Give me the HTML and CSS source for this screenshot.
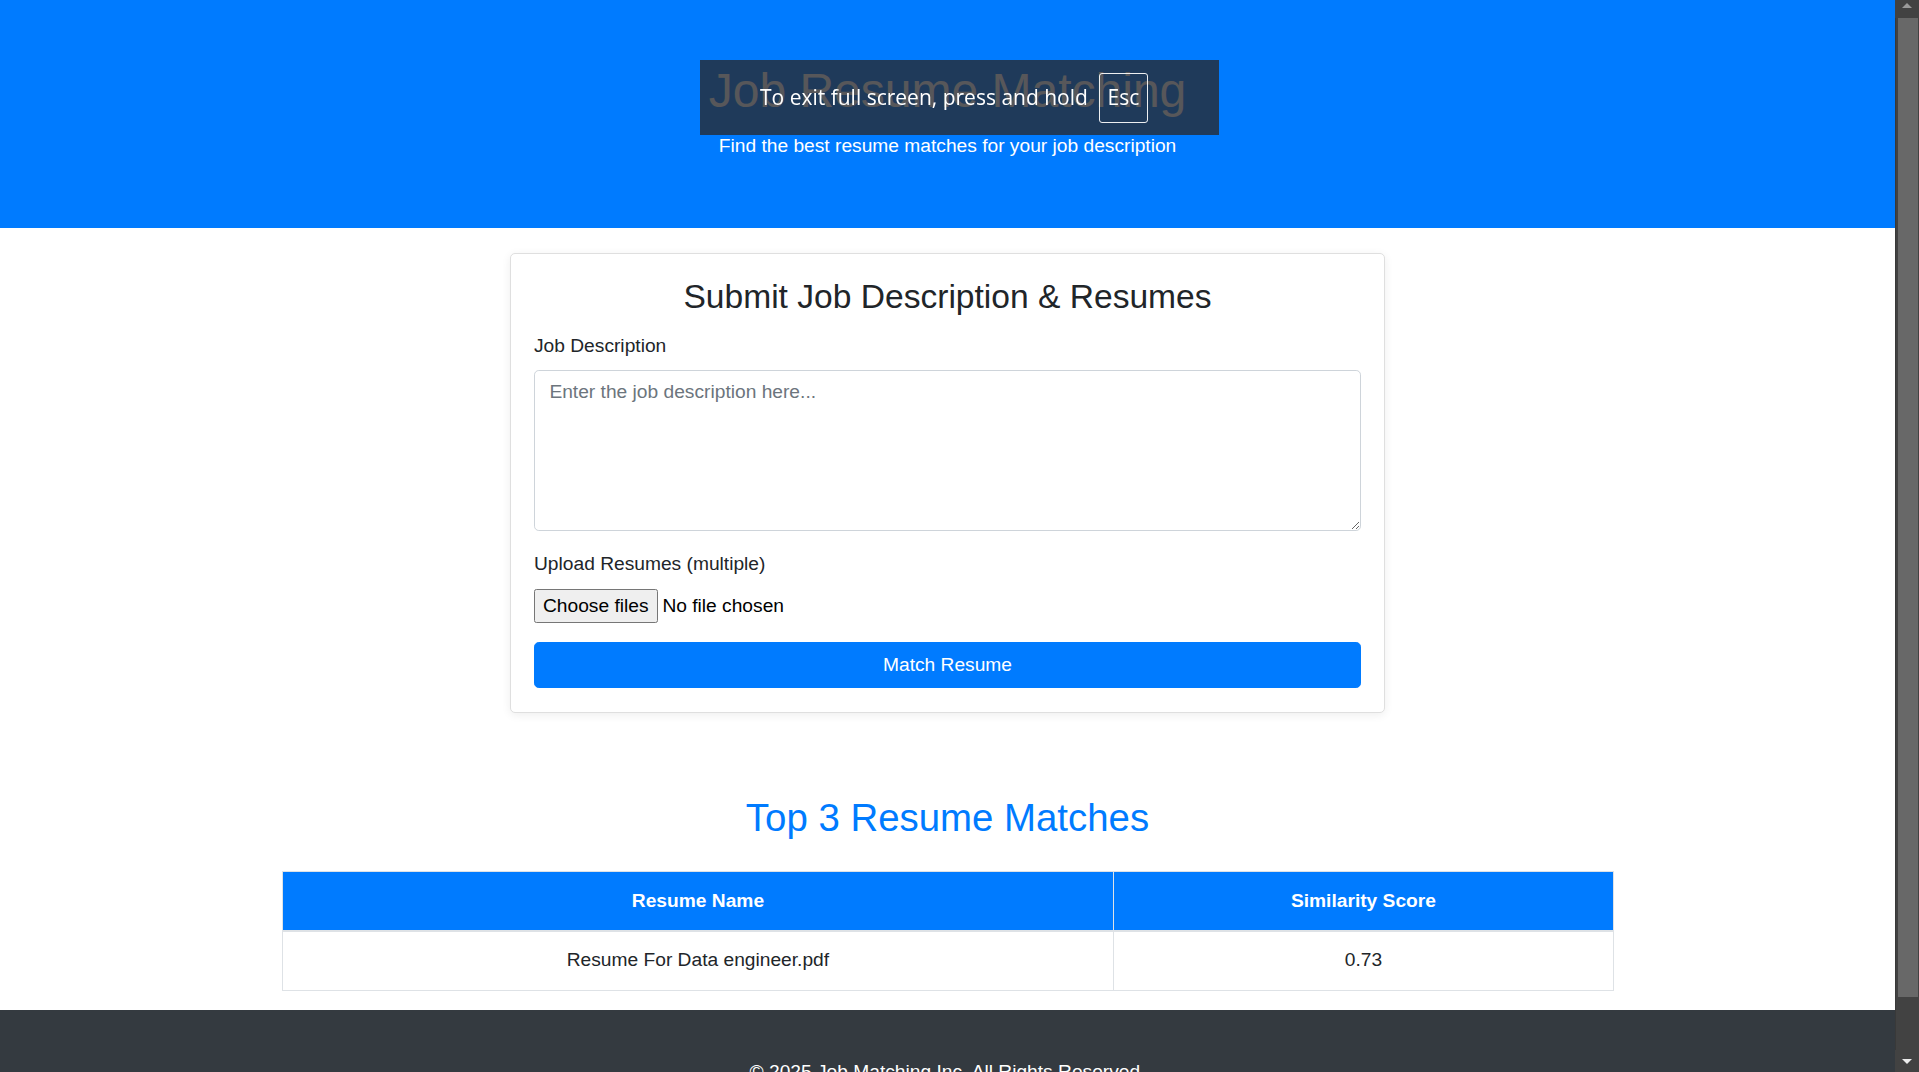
FILE: index.html
```html
<!DOCTYPE html>
<html lang="en">
<head>
<meta charset="utf-8">
<title>Job Resume Matching</title>
<link rel="stylesheet" href="styles.css">
</head>
<body>
<header class="hero">
  <h1 class="hero-title">Job Resume Matching</h1>
  <p class="hero-sub">Find the best resume matches for your job description</p>
</header>
<main class="main">
  <section class="card">
    <h3 class="card-title">Submit Job Description &amp; Resumes</h3>
    <form class="form">
      <div class="field">
        <label class="label" for="jd">Job Description</label>
        <textarea id="jd" class="textarea" rows="5" placeholder="Enter the job description here..."></textarea>
      </div>
      <div class="field">
        <label class="label" for="files">Upload Resumes (multiple)</label>
        <div class="file-row">
          <label class="file-btn" for="files">Choose files</label>
          <span class="file-status">No file chosen</span>
          <input id="files" class="file-input" type="file" multiple>
        </div>
      </div>
      <button type="button" class="btn">Match Resume</button>
    </form>
  </section>
  <section class="results">
    <h2 class="results-title">Top 3 Resume Matches</h2>
    <table class="table">
      <thead>
        <tr><th class="col-name">Resume Name</th><th class="col-score">Similarity Score</th></tr>
      </thead>
      <tbody>
        <tr><td>Resume For Data engineer.pdf</td><td>0.73</td></tr>
      </tbody>
    </table>
  </section>
</main>
<footer class="footer">
  <p class="footer-text">© 2025 Job Matching Inc. All Rights Reserved.</p>
</footer>
<div class="scrollbar">
  <div class="sb-btn sb-up"><span class="sb-arrow-up"></span></div>
  <div class="sb-track"><div class="sb-thumb"></div></div>
  <div class="sb-btn sb-down"><span class="sb-arrow-down"></span></div>
</div>
<div class="fs-toast"><span class="fs-text">To exit full screen, press and hold</span><span class="key">Esc</span></div>
</body>
</html>
```

FILE: styles.css
```css
html {
  font-size: 19.2px;
}

body {
  margin: 0 24px 0 0;
  font-family: "Liberation Sans", Arial, Helvetica, sans-serif;
  font-size: 19.2px;
  line-height: 28.8px;
  color: #212529;
  background: #ffffff;
}

.hero {
  background: #007bff;
  color: #ffffff;
  text-align: center;
  padding: 62px 16px 67px;
}

.hero-title {
  margin: 0 0 12.6px;
  font-size: 48px;
  line-height: 57.6px;
  font-weight: normal;
}

.hero-sub {
  margin: 0;
}

.main {
  display: block;
}

.card {
  width: 875px;
  box-sizing: border-box;
  margin: 25px auto 0;
  padding: 23px 23px 24px;
  border: 1px solid #dfdfdf;
  border-radius: 5px;
  background: #ffffff;
  box-shadow: 0 2px 10px rgba(0, 0, 0, 0.07);
}

.card-title {
  margin: 0 0 14.4px;
  font-size: 33.6px;
  line-height: 40.32px;
  font-weight: normal;
  text-align: center;
}

.field {
  margin-bottom: 19.2px;
}

.label {
  display: block;
  margin-bottom: 9.6px;
}

.textarea {
  display: block;
  width: 100%;
  height: 161px;
  box-sizing: border-box;
  padding: 7.2px 14.4px;
  font: inherit;
  color: #495057;
  background: #ffffff;
  border: 1.2px solid #ced4da;
  border-radius: 4.8px;
  resize: vertical;
}

.textarea::placeholder {
  color: #6c757d;
  opacity: 1;
}

.file-row {
  display: flex;
  align-items: flex-start;
  height: 34.6px;
}

.file-btn {
  box-sizing: border-box;
  height: 34px;
  padding: 1.2px 8px;
  margin-right: 4.8px;
  color: #000000;
  background: #efefef;
  border: 1.2px solid #767676;
  border-radius: 2.4px;
  line-height: 29px;
}

.file-status {
  color: #000000;
  line-height: 33px;
}

.file-input {
  display: none;
}

.btn {
  display: block;
  width: 100%;
  box-sizing: border-box;
  padding: 7.2px 14.4px;
  font: inherit;
  color: #ffffff;
  background: #007bff;
  border: 1.2px solid #007bff;
  border-radius: 4.8px;
  text-align: center;
}

.results {
  margin-top: 82px;
}

.results-title {
  margin: 0 0 30.7px;
  font-size: 38.4px;
  line-height: 46.08px;
  font-weight: normal;
  color: #007bff;
  text-align: center;
}

.table {
  width: 1332px;
  margin: 0 auto 19.2px;
  border-collapse: collapse;
}

.table th,
.table td {
  border: 1px solid #dee2e6;
  padding: 14.4px;
  text-align: center;
  vertical-align: top;
}

.table thead th {
  background: #007bff;
  color: #ffffff;
  font-weight: bold;
  border-bottom: 2px solid #dee2e6;
}

.col-name {
  width: 62.5%;
}

.footer {
  background: #343a40;
  color: #ffffff;
  text-align: center;
  padding: 48px 16px;
}

.footer-text {
  margin: 0;
}

/* simulated dark window scrollbar (drawn over the right edge) */
.scrollbar {
  position: fixed;
  top: 0;
  right: 0;
  width: 24px;
  height: 100vh;
  display: flex;
  flex-direction: column;
  background: #424242;
}

.sb-btn {
  position: relative;
  height: 18px;
  flex: none;
}

.sb-down {
  height: 22px;
}

.sb-track {
  flex: 1;
  padding: 0 1px 0 2px;
  border-left: 1px solid #393939;
}

.sb-thumb {
  height: 979px;
  background: #686868;
}

.sb-arrow-up,
.sb-arrow-down {
  position: absolute;
  left: 7px;
  width: 0;
  height: 0;
  border-left: 5px solid transparent;
  border-right: 5px solid transparent;
}

.sb-arrow-up {
  top: 3px;
  border-bottom: 5px solid #9a9a9a;
}

.sb-arrow-down {
  bottom: 8px;
  border-top: 5px solid #ececec;
}

/* browser full-screen notice */
.fs-toast {
  position: fixed;
  left: 700px;
  top: 60px;
  width: 519px;
  height: 75px;
  box-sizing: border-box;
  padding-left: 60px;
  display: flex;
  align-items: center;
  background: rgba(40, 40, 44, 0.78);
  color: #ffffff;
  font-family: "Open Sans", "Noto Sans", sans-serif;
  font-size: 21px;
}

.fs-text {
  white-space: nowrap;
}

.key {
  display: flex;
  align-items: center;
  justify-content: center;
  width: 49px;
  height: 50px;
  box-sizing: border-box;
  margin-left: 11px;
  border: 1.5px solid rgba(255, 255, 255, 0.92);
  border-radius: 3px;
}
```
